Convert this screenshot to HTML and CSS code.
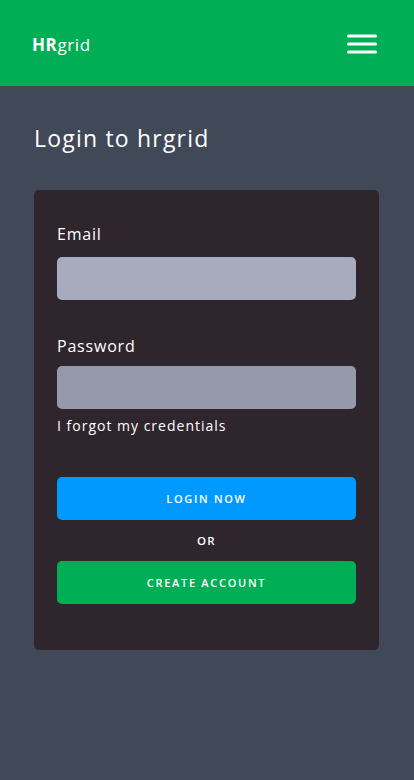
FILE: index.html
```html
<!DOCTYPE html>
<html lang="en">
<head>
<meta charset="utf-8">
<meta name="viewport" content="width=device-width, initial-scale=1">
<title>Login to hrgrid</title>
<link rel="stylesheet" href="styles.css">
</head>
<body>
<header class="topbar">
  <div class="logo"><b>HR</b>grid</div>
  <button class="menu" aria-label="Menu">
    <svg width="30" height="22" viewBox="0 0 30 22"><g stroke="#fff" stroke-width="3" stroke-linecap="round"><line x1="1.5" y1="3" x2="28.5" y2="3"/><line x1="1.5" y1="11" x2="28.5" y2="11"/><line x1="1.5" y1="19" x2="28.5" y2="19"/></g></svg>
  </button>
</header>
<main class="content">
  <h1 class="title">Login to hrgrid</h1>
  <form class="card">
    <label class="label">Email</label>
    <input class="field field-email" type="text">
    <label class="label label-pw">Password</label>
    <input class="field field-pw" type="password">
    <a class="forgot">I forgot my credentials</a>
    <button type="button" class="btn btn-login">LOGIN NOW</button>
    <div class="or">OR</div>
    <button type="button" class="btn btn-create">CREATE ACCOUNT</button>
  </form>
</main>
</body>
</html>
```
FILE: styles.css
```css
* { box-sizing: border-box; }
html, body { margin: 0; padding: 0; }
body {
  background: #414858;
  font-family: "Open Sans", "Lato", sans-serif;
  color: #fff;
  min-height: 780px;
}
.topbar {
  height: 86px;
  background: #00AF55;
  display: flex;
  align-items: center;
  justify-content: space-between;
  padding: 0 37px 0 32px;
}
.logo {
  font-family: "Open Sans", sans-serif;
  font-size: 17px;
  letter-spacing: 0.6px;
  color: #fff;
  margin-top: 3px;
}
.logo b { font-weight: 700; }
.menu {
  background: none;
  border: 0;
  padding: 0;
  display: flex;
  margin-top: 2px;
}
.content {
  padding: 36px 35px 40px 34px;
}
.title {
  margin: 0 0 36px;
  font-size: 23px;
  font-weight: 400;
  line-height: 32px;
  letter-spacing: 1.2px;
}
.card {
  background: #2F252D;
  border-radius: 5px;
  padding: 33px 23px 46px;
  display: flex;
  flex-direction: column;
}
.label {
  font-size: 16px;
  line-height: 22px;
  margin-bottom: 12px;
  letter-spacing: 0.8px;
}
.label-pw { margin-top: 35px; margin-bottom: 9px; }
.field {
  height: 43px;
  border: 0;
  border-radius: 5px;
  width: 100%;
  display: block;
}
.field-email { background: #A6ABBD; }
.field-pw { background: #959AAB; }
.forgot {
  margin-top: 7px;
  font-size: 14px;
  line-height: 20px;
  letter-spacing: 1px;
}
.btn {
  height: 43px;
  border: 0;
  border-radius: 5px;
  color: #fff;
  font-family: inherit;
  font-size: 11px;
  font-weight: 600;
  letter-spacing: 1.7px;
  width: 100%;
}
.btn-login { background: #0099FF; margin-top: 41px; }
.btn-create { background: #00AF55; }
.or {
  text-align: center;
  font-size: 11.5px;
  font-weight: 600;
  letter-spacing: 1.2px;
  line-height: 41px;
}
```
